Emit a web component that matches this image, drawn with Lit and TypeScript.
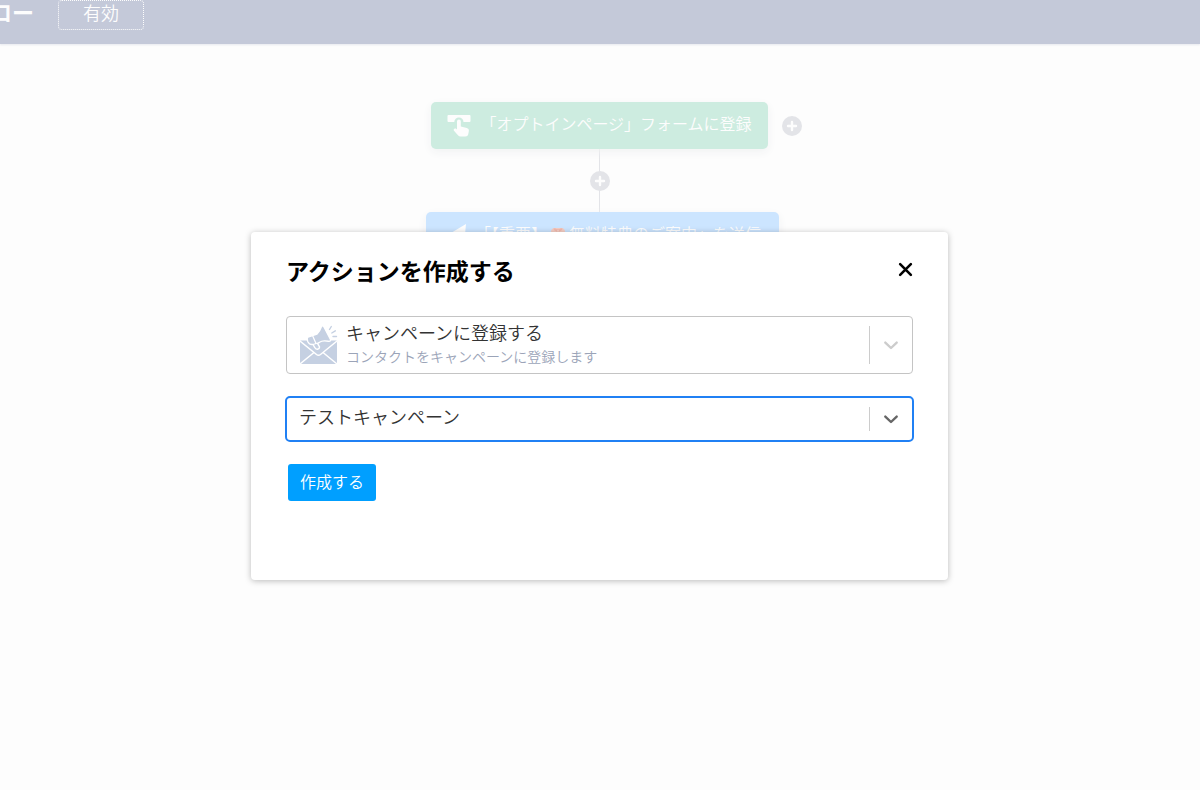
import { LitElement, html, css, svg } from "lit";
import { customElement } from "lit/decorators.js";

const plus = html`<svg class="plus-icon" viewBox="0 0 20 20" aria-hidden="true">
  <circle cx="10" cy="10" r="10" fill="#e3e4e8" />
  <path d="M10 6v8M6 10h8" stroke="#fdfdfd" stroke-width="2.4" stroke-linecap="round" />
</svg>`;

const chevron = svg`<path d="M4.3 7.6 10 13l5.700-5.400" fill="none" stroke="currentColor" stroke-width="2.400" stroke-linecap="round" stroke-linejoin="round"/>`;

@customElement("app-root")
export class AppRoot extends LitElement {
  static styles = css`
    :host {
      display: block;
      position: relative;
      min-height: 100vh;
      overflow: hidden;
      background: #fdfdfd;
      font-family: "Noto Sans CJK JP", sans-serif;
      font-weight: 350;
      color: #333;
    }
    * {
      box-sizing: border-box;
    }
    button,
    select {
      font: inherit;
      margin: 0;
      border: 0;
      padding: 0;
      background: none;
      color: inherit;
      cursor: pointer;
    }
    svg {
      display: block;
      flex: none;
    }
    .bar {
      display: flex;
      align-items: flex-start;
      gap: 24px;
      height: 44px;
      background: #c4c9d9;
      color: #fdfdfd;
      box-shadow: 0 1px 2px #e6e8ee;
    }
    .page-title {
      margin: 0 0 0 -32px;
      font-size: 22px;
      line-height: 22px;
      font-weight: 700;
      white-space: nowrap;
    }
    .status {
      width: 86px;
      height: 30px;
      padding-bottom: 6px;
      border: 1px dotted #fdfdfd;
      border-radius: 4px;
      font-size: 18px;
      line-height: 22px;
    }
    .flow {
      display: flex;
      flex-direction: column;
      align-items: center;
      padding: 58px 1px 0 0;
    }
    .node {
      position: relative;
      display: flex;
      align-items: center;
      height: 47px;
      padding: 0 16px;
      gap: 9px;
      border-radius: 5px;
      color: #fdfdfd;
      font-size: 16px;
      line-height: 24px;
      white-space: nowrap;
      box-shadow: 0 3px 10px #f1f2f3;
    }
    .node span {
      padding-bottom: 6px;
    }
    .trigger {
      background: #cdece0;
    }
    .mail {
      margin-left: 6px;
      padding-right: 18px;
      background: #cce5ff;
    }
    .gift {
      display: inline-block;
      width: 16px;
      height: 16px;
      margin: 0 3px;
      vertical-align: -2px;
    }
    .node-icon {
      width: 24px;
      height: 24px;
    }
    .plus-icon {
      width: 20px;
      height: 20px;
    }
    .branch {
      position: absolute;
      left: calc(100% + 14px);
    }
    .link {
      display: grid;
      place-items: center;
      height: 63px;
      background: linear-gradient(#e3e4e8, #e3e4e8) center / 1px 100% no-repeat;
    }
    .overlay {
      position: absolute;
      inset: 0;
      display: flex;
      justify-content: center;
      align-items: flex-start;
      padding: 232px 25px 24px 24px;
    }
    .dialog {
      width: 100%;
      max-width: 697px;
      padding: 20px 35px 79px;
      border-radius: 4px;
      background: #fff;
      box-shadow: 0 1px 6px #0004;
    }
    .head {
      display: flex;
      align-items: center;
      justify-content: space-between;
      margin-bottom: 28px;
    }
    .heading {
      margin: 0;
      font-size: 23px;
      line-height: 36px;
      font-weight: 700;
      color: #000;
    }
    .close {
      color: #000;
      padding-bottom: 2px;
    }
    .close svg {
      width: 15px;
      height: 15px;
    }
    .field {
      display: flex;
      align-items: center;
      margin-bottom: 22px;
      padding: 0 11px 0 13px;
      border: 1px solid #c4c4c4;
      border-radius: 4px;
      color: #ccc;
    }
    .action {
      height: 58px;
    }
    .campaign {
      height: 46px;
      margin: 0 -1px 22px;
      padding: 0 11px 0 12px;
      border: 2px solid #2080f4;
      border-radius: 5px;
      color: #666;
    }
    .campaign select {
      padding-bottom: 6px;
    }
    .text {
      display: flex;
      flex: 1;
      flex-direction: column;
      min-width: 0;
      padding-bottom: 4px;
    }
    select {
      appearance: none;
      width: 100%;
      outline: none;
      font-size: 18px;
      line-height: 26px;
      color: #333;
      opacity: 1;
    }
    .hint {
      font-size: 14px;
      line-height: 22px;
      color: #9ba4b8;
    }
    .envelope {
      width: 38px;
      height: 40px;
      margin-right: 8px;
    }
    .split {
      align-self: stretch;
      width: 1px;
      margin: 9px 11px 9px 0;
      background: #ccc;
    }
    .chevron {
      width: 20px;
      height: 20px;
    }
    .submit {
      height: 37px;
      margin-left: 2px;
      padding: 0 12px 4px;
      border-radius: 3px;
      background: #009fff;
      color: #fff;
      font-size: 16px;
      line-height: 24px;
    }
  `;

  render() {
    return html`
      <header class="bar">
        <h1 class="page-title">フロー</h1>
        <button class="status">有効</button>
      </header>
      <main class="flow">
        <div class="node trigger">
          <svg class="node-icon" viewBox="0 0 24 24" fill="#fdfdfd" aria-hidden="true">
            <path d="M1.500 1h21q1 0 1 1v5q0 1-1 1H16.500a4.600 4.600 0 0 0-9.200 0H1.500q-1 0-1-1V2q0-1 1-1Z" />
            <path d="M10 7.500a1.900 1.900 0 0 1 3.800 0v5l6 1.400q2.400.6 2.100 2.800l-.7 3.800Q20.700 22.500 18.500 22.500h-5q-1.300 0-2.300-1l-4-4.500c-1.400-1.700.4-3.200 1.700-2.400l1.100.8Z" />
          </svg>
          <span>「オプトインページ」フォームに登録</span>
          <button class="branch" aria-label="アクションを追加">${plus}</button>
        </div>
        <div class="link">
          <button aria-label="アクションを追加">${plus}</button>
        </div>
        <div class="node mail">
          <svg class="node-icon" viewBox="0 0 24 24" fill="#fdfdfd" aria-hidden="true">
            <path d="M24 0 3 12.500l6 2.800 4-2.500V23l4-4.500 5 2.300Z" />
          </svg>
          <span>「【重要】<svg class="gift" viewBox="0 0 16 16" aria-hidden="true">
              <rect x="1" y="2" width="14" height="13" rx="4" fill="#f6cfc5" />
              <path d="M7 3h2v12H7ZM8 4C3 0 1 4 8 6 15 4 13 0 8 4Z" fill="#f3b9ae" />
            </svg>無料特典のご案内」を送信</span>
        </div>
      </main>
      <div class="overlay">
        <section class="dialog" role="dialog" aria-modal="true" aria-labelledby="heading">
          <div class="head">
            <h2 class="heading" id="heading">アクションを作成する</h2>
            <button class="close" aria-label="閉じる">
              <svg viewBox="0 0 14 14"><path d="M2 2l10 10M12 2 2 12" stroke="currentColor" stroke-width="2.400" stroke-linecap="round" /></svg>
            </button>
          </div>
          <div class="field action">
            <svg class="envelope" viewBox="0 0 38 40" aria-hidden="true">
              <path d="M0 16.500q0-1 1-1h35q1 0 1 1V39H0Z" fill="#c5d0e2" />
              <path d="M0 16 16.500 29.500q2 1.600 4 0L37 16M0 39l14-11.500M37 39 23 27.500" fill="none" stroke="#fff" stroke-width="1.500" />
              <path d="M8 12 17 9q3-3 4.500-7.500Q22.300-.3 24 2l6.500 12.500q.3 2.200-2 1.800-6-1.300-9 1l-2 1 2 3.500q.2 2-2 2.400-2 .2-2.700-1.600L13 19.500q-3.500.5-5-2.500-1.600-3.500 0-5Z" fill="#c5d0e2" stroke="#fff" stroke-width="1.400" stroke-linejoin="round" />
              <path d="m12.500 10.500 3.500 8M13 19.500l4-1.300" stroke="#fff" stroke-width="1.200" fill="none" />
              <path d="m29.500 4.500 1.800-3M31.800 8l3.500-2.200M33 11.500h3.500" stroke="#c5d0e2" stroke-width="1.400" stroke-linecap="round" />
            </svg>
            <div class="text">
              <select id="action" aria-label="アクション" aria-describedby="hint" disabled>
                <option>キャンペーンに登録する</option>
              </select>
              <span class="hint" id="hint">コンタクトをキャンペーンに登録します</span>
            </div>
            <span class="split"></span>
            <svg class="chevron" viewBox="0 0 20 20" aria-hidden="true">${chevron}</svg>
          </div>
          <div class="field campaign">
            <select id="campaign" aria-label="キャンペーン">
              <option>テストキャンペーン</option>
            </select>
            <span class="split"></span>
            <svg class="chevron" viewBox="0 0 20 20" aria-hidden="true">${chevron}</svg>
          </div>
          <button class="submit">作成する</button>
        </section>
      </div>
    `;
  }
}
